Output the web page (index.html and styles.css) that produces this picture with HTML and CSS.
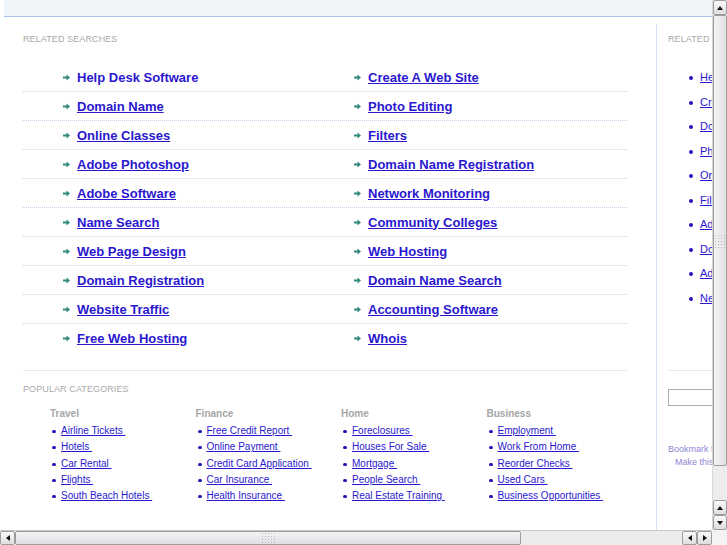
FILE: index.html
```html
<!DOCTYPE html>
<html lang="en">
<head>
    <meta charset="UTF-8">
    <title>Related Searches</title>
    <link rel="stylesheet" href="styles.css">
</head>
<body>
    <div class="viewport">
        <div class="page">
            <div class="topbar"></div>

            <div class="wrap">
                <div class="main">
                    <div class="section-title">RELATED SEARCHES</div>

                    <div class="searches">
                        <div class="row">
                            <div class="cell"><svg class="arrow" width="7" height="7" viewBox="0 0 7 7"><path d="M0 2.5h3.5V0.5L7 3.5 3.5 6.5V4.5H0z"/></svg><a href="#" class="hover">Help Desk Software</a></div>
                            <div class="cell"><svg class="arrow" width="7" height="7" viewBox="0 0 7 7"><path d="M0 2.5h3.5V0.5L7 3.5 3.5 6.5V4.5H0z"/></svg><a href="#">Create A Web Site</a></div>
                        </div>
                        <div class="row">
                            <div class="cell"><svg class="arrow" width="7" height="7" viewBox="0 0 7 7"><path d="M0 2.5h3.5V0.5L7 3.5 3.5 6.5V4.5H0z"/></svg><a href="#">Domain Name</a></div>
                            <div class="cell"><svg class="arrow" width="7" height="7" viewBox="0 0 7 7"><path d="M0 2.5h3.5V0.5L7 3.5 3.5 6.5V4.5H0z"/></svg><a href="#">Photo Editing</a></div>
                        </div>
                        <div class="row">
                            <div class="cell"><svg class="arrow" width="7" height="7" viewBox="0 0 7 7"><path d="M0 2.5h3.5V0.5L7 3.5 3.5 6.5V4.5H0z"/></svg><a href="#">Online Classes</a></div>
                            <div class="cell"><svg class="arrow" width="7" height="7" viewBox="0 0 7 7"><path d="M0 2.5h3.5V0.5L7 3.5 3.5 6.5V4.5H0z"/></svg><a href="#">Filters</a></div>
                        </div>
                        <div class="row">
                            <div class="cell"><svg class="arrow" width="7" height="7" viewBox="0 0 7 7"><path d="M0 2.5h3.5V0.5L7 3.5 3.5 6.5V4.5H0z"/></svg><a href="#">Adobe Photoshop</a></div>
                            <div class="cell"><svg class="arrow" width="7" height="7" viewBox="0 0 7 7"><path d="M0 2.5h3.5V0.5L7 3.5 3.5 6.5V4.5H0z"/></svg><a href="#">Domain Name Registration</a></div>
                        </div>
                        <div class="row">
                            <div class="cell"><svg class="arrow" width="7" height="7" viewBox="0 0 7 7"><path d="M0 2.5h3.5V0.5L7 3.5 3.5 6.5V4.5H0z"/></svg><a href="#">Adobe Software</a></div>
                            <div class="cell"><svg class="arrow" width="7" height="7" viewBox="0 0 7 7"><path d="M0 2.5h3.5V0.5L7 3.5 3.5 6.5V4.5H0z"/></svg><a href="#">Network Monitoring</a></div>
                        </div>
                        <div class="row">
                            <div class="cell"><svg class="arrow" width="7" height="7" viewBox="0 0 7 7"><path d="M0 2.5h3.5V0.5L7 3.5 3.5 6.5V4.5H0z"/></svg><a href="#">Name Search</a></div>
                            <div class="cell"><svg class="arrow" width="7" height="7" viewBox="0 0 7 7"><path d="M0 2.5h3.5V0.5L7 3.5 3.5 6.5V4.5H0z"/></svg><a href="#">Community Colleges</a></div>
                        </div>
                        <div class="row">
                            <div class="cell"><svg class="arrow" width="7" height="7" viewBox="0 0 7 7"><path d="M0 2.5h3.5V0.5L7 3.5 3.5 6.5V4.5H0z"/></svg><a href="#">Web Page Design</a></div>
                            <div class="cell"><svg class="arrow" width="7" height="7" viewBox="0 0 7 7"><path d="M0 2.5h3.5V0.5L7 3.5 3.5 6.5V4.5H0z"/></svg><a href="#">Web Hosting</a></div>
                        </div>
                        <div class="row">
                            <div class="cell"><svg class="arrow" width="7" height="7" viewBox="0 0 7 7"><path d="M0 2.5h3.5V0.5L7 3.5 3.5 6.5V4.5H0z"/></svg><a href="#">Domain Registration</a></div>
                            <div class="cell"><svg class="arrow" width="7" height="7" viewBox="0 0 7 7"><path d="M0 2.5h3.5V0.5L7 3.5 3.5 6.5V4.5H0z"/></svg><a href="#">Domain Name Search</a></div>
                        </div>
                        <div class="row">
                            <div class="cell"><svg class="arrow" width="7" height="7" viewBox="0 0 7 7"><path d="M0 2.5h3.5V0.5L7 3.5 3.5 6.5V4.5H0z"/></svg><a href="#">Website Traffic</a></div>
                            <div class="cell"><svg class="arrow" width="7" height="7" viewBox="0 0 7 7"><path d="M0 2.5h3.5V0.5L7 3.5 3.5 6.5V4.5H0z"/></svg><a href="#">Accounting Software</a></div>
                        </div>
                        <div class="row">
                            <div class="cell"><svg class="arrow" width="7" height="7" viewBox="0 0 7 7"><path d="M0 2.5h3.5V0.5L7 3.5 3.5 6.5V4.5H0z"/></svg><a href="#">Free Web Hosting</a></div>
                            <div class="cell"><svg class="arrow" width="7" height="7" viewBox="0 0 7 7"><path d="M0 2.5h3.5V0.5L7 3.5 3.5 6.5V4.5H0z"/></svg><a href="#">Whois</a></div>
                        </div>
                    </div>

                    <div class="section-title popular">POPULAR CATEGORIES</div>

                    <div class="categories">
                        <div class="cat">
                            <div class="cat-head">Travel</div>
                            <ul>
                                <li><a href="#">Airline Tickets </a></li>
                                <li><a href="#">Hotels </a></li>
                                <li><a href="#">Car Rental </a></li>
                                <li><a href="#">Flights </a></li>
                                <li><a href="#">South Beach Hotels </a></li>
                            </ul>
                        </div>
                        <div class="cat">
                            <div class="cat-head">Finance</div>
                            <ul>
                                <li><a href="#">Free Credit Report </a></li>
                                <li><a href="#">Online Payment </a></li>
                                <li><a href="#">Credit Card Application </a></li>
                                <li><a href="#">Car Insurance </a></li>
                                <li><a href="#">Health Insurance </a></li>
                            </ul>
                        </div>
                        <div class="cat">
                            <div class="cat-head">Home</div>
                            <ul>
                                <li><a href="#">Foreclosures </a></li>
                                <li><a href="#">Houses For Sale </a></li>
                                <li><a href="#">Mortgage </a></li>
                                <li><a href="#">People Search </a></li>
                                <li><a href="#">Real Estate Training </a></li>
                            </ul>
                        </div>
                        <div class="cat">
                            <div class="cat-head">Business</div>
                            <ul>
                                <li><a href="#">Employment </a></li>
                                <li><a href="#">Work From Home </a></li>
                                <li><a href="#">Reorder Checks </a></li>
                                <li><a href="#">Used Cars </a></li>
                                <li><a href="#">Business Opportunities </a></li>
                            </ul>
                        </div>
                    </div>
                </div>

                <div class="side">
                    <div class="section-title">RELATED SEARCHES</div>
                    <ul class="side-list">
                        <li><a href="#">Help Desk Software</a></li>
                        <li><a href="#">Create A Web Site</a></li>
                        <li><a href="#">Domain Name</a></li>
                        <li><a href="#">Photo Editing</a></li>
                        <li><a href="#">Online Classes</a></li>
                        <li><a href="#">Filters</a></li>
                        <li><a href="#">Adobe Photoshop</a></li>
                        <li><a href="#">Domain Name Registration</a></li>
                        <li><a href="#">Adobe Software</a></li>
                        <li><a href="#">Network Monitoring</a></li>
                    </ul>
                    <div class="search-box">
                        <input type="text" class="search-input">
                    </div>
                    <div class="bookmark">Bookmark this page</div>
                    <div class="homepage">Make this your homepage</div>
                </div>
            </div>
        </div>
    </div>

    <div class="vscroll">
        <div class="sb-btn"><span class="tri up"></span></div>
        <div class="sb-thumb v"><span class="grip"></span></div>
        <div class="sb-trough"></div>
        <div class="sb-btn"><span class="tri up"></span></div>
        <div class="sb-btn"><span class="tri down"></span></div>
    </div>

    <div class="hscroll">
        <div class="sb-btn"><span class="tri left"></span></div>
        <div class="sb-thumb h"><span class="grip"></span></div>
        <div class="sb-trough"></div>
        <div class="sb-btn"><span class="tri left"></span></div>
        <div class="sb-btn"><span class="tri right"></span></div>
    </div>

    <div class="corner"></div>
</body>
</html>
```

FILE: styles.css
```css
body {
    margin: 0;
    width: 727px;
    height: 545px;
    display: grid;
    grid-template-columns: 712px 15px;
    grid-template-rows: 530px 15px;
    overflow: hidden;
    font-family: "Liberation Sans", Arial, sans-serif;
    background: #fff;
}

.viewport {
    overflow: hidden;
}

.page {
    width: 900px;
}

.topbar {
    margin-left: 4px;
    height: 16px;
    background: #eff4f9;
    border-bottom: 1px solid #a9c4e9;
}

.wrap {
    display: flex;
    margin-top: 7px;
}

.main {
    width: 604px;
    margin-left: 23px;
    margin-right: 29px;
    padding-top: 10px;
}

.section-title {
    font-size: 9px;
    line-height: 11px;
    color: #a9a9a9;
    letter-spacing: 0.1px;
}

/* related searches table */
.searches {
    margin-top: 18px;
    padding-bottom: 18px;
    border-bottom: 1px solid #e1e9f5;
}

.row {
    display: grid;
    grid-template-columns: 291px 1fr;
    height: 28px;
    border-bottom: 1px dotted #c3d4ec;
}

.row:last-child {
    border-bottom: none;
}

.cell {
    display: flex;
    align-items: center;
    padding-left: 40px;
}

.arrow {
    fill: #2f8a7c;
    margin-right: 7px;
}

.cell a {
    font-size: 13px;
    font-weight: bold;
    color: #2a17cf;
}

.cell a.hover {
    text-decoration: none;
}

/* popular categories */
.popular {
    margin-top: 13px;
}

.categories {
    display: grid;
    grid-template-columns: repeat(4, 145.5px);
    margin-top: 13px;
    padding-left: 27px;
}

.cat-head {
    font-size: 10px;
    font-weight: bold;
    line-height: 12px;
    color: #a6a6a6;
}

.cat ul {
    list-style: none;
    margin: 3px 0 0;
    padding: 0;
}

.cat li {
    position: relative;
    height: 16.3px;
    line-height: 16.3px;
    padding-left: 11px;
    font-size: 10px;
}

.cat li::before {
    content: "";
    position: absolute;
    left: 2px;
    top: 7px;
    width: 4px;
    height: 3px;
    border-radius: 2px;
    background: #2515b8;
}

.cat a {
    color: #2a17cf;
    white-space: pre;
}

/* sidebar */
.side {
    width: 220px;
    border-left: 1px solid #d3e0f2;
    padding-left: 11px;
    padding-top: 10px;
    height: 496px;
}

.side-list {
    list-style: none;
    margin: 20px 0 0;
    padding: 0 0 60px;
    border-bottom: 1px solid #e1e9f5;
}

.side-list li {
    position: relative;
    height: 24.5px;
    line-height: 24.5px;
    padding-left: 32px;
    font-size: 11px;
}

.side-list li::before {
    content: "";
    position: absolute;
    left: 21px;
    top: 11px;
    width: 4px;
    height: 4px;
    border-radius: 2px;
    background: #2515b8;
}

.side-list a {
    color: #2a17cf;
}

.search-box {
    margin-top: 18px;
}

.search-input {
    display: block;
    width: 150px;
    height: 17px;
    box-sizing: border-box;
    border: 1px solid #aeaeae;
    margin: 0;
    padding: 0;
}

.bookmark,
.homepage {
    font-size: 9px;
    line-height: 13px;
    color: #8b86d6;
}

.bookmark {
    margin-top: 37px;
}

.homepage {
    padding-left: 7px;
}

/* scrollbars */
.vscroll,
.hscroll {
    display: flex;
    background: #f3f3f3;
}

.vscroll {
    flex-direction: column;
    border-left: 1px solid #d8d8d8;
}

.hscroll {
    border-top: 1px solid #c8c8c8;
}

.sb-btn {
    flex: none;
    width: 13px;
    height: 13px;
    border: 1px solid #9c9c9c;
    border-radius: 2px;
    background: linear-gradient(#fafafa, #dedede);
    display: flex;
    align-items: center;
    justify-content: center;
    box-sizing: content-box;
}

.vscroll .sb-btn {
    width: 12px;
}

.hscroll .sb-btn {
    height: 12px;
}

.sb-thumb {
    flex: none;
    border: 1px solid #9c9c9c;
    border-radius: 2px;
    display: flex;
    align-items: center;
    justify-content: center;
}

.sb-thumb.v {
    height: 449px;
    background: linear-gradient(90deg, #f4f4f6, #dfe0e4);
}

.sb-thumb.h {
    width: 504px;
    background: linear-gradient(#f4f4f6, #dfe0e4);
}

.grip {
    width: 14px;
    height: 12px;
    background: radial-gradient(circle, #b9b9b9 0.6px, transparent 1px) 0 0 / 3px 3px;
}

.sb-thumb.v .grip {
    width: 12px;
    height: 14px;
}

.sb-trough {
    flex: 1;
    background: radial-gradient(circle, #e2e2e2 0.5px, transparent 1px) 0 0 / 2px 2px, #fafafa;
}

.tri {
    width: 0;
    height: 0;
    border: 3px solid transparent;
}

.tri.up {
    border-bottom: 4px solid #111;
    border-top-width: 0;
}

.tri.down {
    border-top: 4px solid #111;
    border-bottom-width: 0;
}

.tri.left {
    border-right: 4px solid #111;
    border-left-width: 0;
}

.tri.right {
    border-left: 4px solid #111;
    border-right-width: 0;
}

.corner {
    background: #f3f3f3;
}
```
